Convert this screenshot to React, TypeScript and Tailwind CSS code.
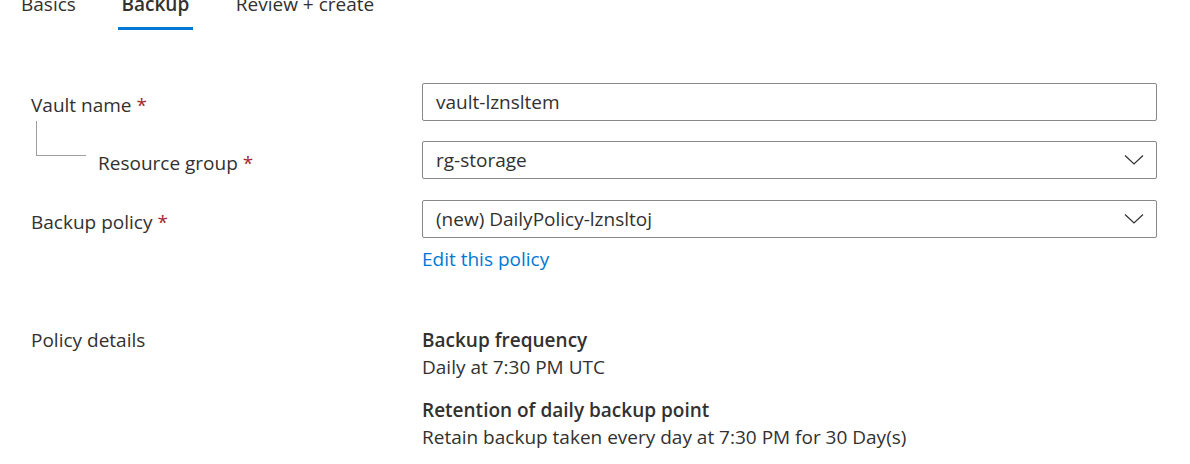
const FONT = { fontFamily: '"Open Sans", "Noto Sans", sans-serif' };

function Req() {
  return <span className="ml-[5px] text-[#a4262c]">*</span>;
}

function Chevron() {
  return (
    <svg width="20" height="12" viewBox="0 0 20 12" className="text-[#323130]">
      <path d="M1 1.5 L10 10 L19 1.5" fill="none" stroke="currentColor" strokeWidth="1.2" />
    </svg>
  );
}

function Field({ value, select }: { value: string; select?: boolean }) {
  return (
    <div className="flex h-[38px] w-[735px] items-center justify-between rounded-[2px] border border-[#8a8886] pl-[13px] pr-[12px]">
      <span>{value}</span>
      {select && <Chevron />}
    </div>
  );
}

export default function App() {
  return (
    <div className="h-[464px] w-[1190px] overflow-hidden bg-white text-[19px] leading-6 text-[#323130]" style={FONT}>
      <div className="-mt-[8px] flex pl-[21px]">
        <div className="pb-[14px]">Basics</div>
        <div className="ml-[42px] w-[75px] border-b-[3px] border-[#0078d4] pb-[11px] text-center font-semibold">Backup</div>
        <div className="ml-[43px] pb-[14px]">Review + create</div>
      </div>

      <div className="pl-[31px] pt-[53px]">
        <div className="flex items-start">
          <div className="w-[391px] pt-[10px]">
            Vault name<Req />
          </div>
          <Field value="vault-lznsltem" />
        </div>

        <div className="mt-[20px] flex items-start">
          <div className="relative w-[391px] pt-[10px] pl-[67px]">
            <div className="absolute -top-[20px] left-[5px] h-[35px] w-[50px] border-b border-l border-[#a19f9d]" />
            Resource group<Req />
          </div>
          <Field value="rg-storage" select />
        </div>

        <div className="mt-[21px] flex items-start">
          <div className="w-[391px] pt-[10px]">
            Backup policy<Req />
          </div>
          <div>
            <Field value="(new) DailyPolicy-lznsltoj" select />
            <div className="mt-[9px] text-[#0078d4]">Edit this policy</div>
          </div>
        </div>

        <div className="mt-[57px] flex items-start">
          <div className="w-[391px]">Policy details</div>
          <div>
            <div className="font-semibold">Backup frequency</div>
            <div className="mt-[3px]">Daily at 7:30 PM UTC</div>
            <div className="mt-[19px] font-semibold">Retention of daily backup point</div>
            <div className="mt-[3px]">Retain backup taken every day at 7:30 PM for 30 Day(s)</div>
          </div>
        </div>
      </div>
    </div>
  );
}
